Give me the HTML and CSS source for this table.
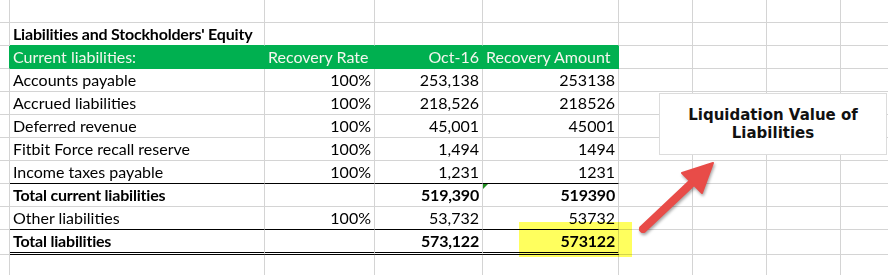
FILE: index.html
```html
<!DOCTYPE html>
<html>
<head>
<meta charset="utf-8">
<link rel="stylesheet" href="styles.css">
</head>
<body>
<div class="sheet">
  <!-- row 1 -->
  <div class="c"></div><div class="c"></div><div class="c"></div><div class="c"></div><div class="c"></div><div class="c"></div><div class="c"></div><div class="c"></div><div class="c"></div>
  <!-- row 2 -->
  <div class="c"></div><div class="c b gb">Liabilities and Stockholders' Equity</div><div class="c gb"></div><div class="c gb"></div><div class="c gb"></div><div class="c"></div><div class="c"></div><div class="c"></div><div class="c"></div>
  <!-- row 3 header -->
  <div class="c gr"></div><div class="c hd">Current liabilities:</div><div class="c hd">Recovery Rate</div><div class="c hd r">Oct-16</div><div class="c hd">Recovery Amount</div><div class="c"></div><div class="c"></div><div class="c"></div><div class="c"></div>
  <!-- row 4 -->
  <div class="c"></div><div class="c">Accounts payable</div><div class="c r">100%</div><div class="c r">253,138</div><div class="c r">253138</div><div class="c"></div><div class="c"></div><div class="c"></div><div class="c"></div>
  <!-- row 5 -->
  <div class="c"></div><div class="c">Accrued liabilities</div><div class="c r">100%</div><div class="c r">218,526</div><div class="c r">218526</div><div class="c"></div><div class="c"></div><div class="c"></div><div class="c"></div>
  <!-- row 6 -->
  <div class="c"></div><div class="c">Deferred revenue</div><div class="c r">100%</div><div class="c r">45,001</div><div class="c r">45001</div><div class="c"></div><div class="c"></div><div class="c"></div><div class="c"></div>
  <!-- row 7 -->
  <div class="c"></div><div class="c">Fitbit Force recall reserve</div><div class="c r">100%</div><div class="c r">1,494</div><div class="c r">1494</div><div class="c"></div><div class="c"></div><div class="c"></div><div class="c"></div>
  <!-- row 8 -->
  <div class="c"></div><div class="c bk">Income taxes payable</div><div class="c r bk">100%</div><div class="c r bk">1,231</div><div class="c r bk">1231</div><div class="c"></div><div class="c"></div><div class="c"></div><div class="c"></div>
  <!-- row 9 -->
  <div class="c"></div><div class="c b">Total current liabilities</div><div class="c"></div><div class="c r b">519,390</div><div class="c r b flag">519390</div><div class="c"></div><div class="c"></div><div class="c"></div><div class="c"></div>
  <!-- row 10 -->
  <div class="c"></div><div class="c bk">Other liabilities</div><div class="c r bk">100%</div><div class="c r bk">53,732</div><div class="c r bk">53732</div><div class="c"></div><div class="c"></div><div class="c"></div><div class="c"></div>
  <!-- row 11 -->
  <div class="c"></div><div class="c b dbl">Total liabilities</div><div class="c dbl"></div><div class="c r b dbl">573,122</div><div class="c r b dbl">573122</div><div class="c"></div><div class="c"></div><div class="c"></div><div class="c"></div>
  <!-- row 12 -->
  <div class="c"></div><div class="c"></div><div class="c"></div><div class="c"></div><div class="c"></div><div class="c"></div><div class="c"></div><div class="c"></div><div class="c"></div>
</div>

<div class="hilite"></div>

<div class="textbox">Liquidation Value of<br>Liabilities</div>

<svg class="arrow" width="100" height="90" viewBox="0 0 100 90">
  <g class="arrow-shape">
    <line x1="13" y1="74" x2="66" y2="24" stroke="#e84c48" stroke-width="8" stroke-linecap="round"/>
    <polygon points="83,8 52,18 72,38" fill="#e84c48" stroke="#e84c48" stroke-width="2" stroke-linejoin="round"/>
  </g>
</svg>
</body>
</html>
```
FILE: styles.css
```css
html, body {
  margin: 0;
  padding: 0;
  background: #ffffff;
  overflow: hidden;
}

body {
  width: 888px;
  height: 275px;
  position: relative;
  font-family: "Lato", "Liberation Sans", sans-serif;
  font-size: 16px;
  color: #000;
}

.sheet {
  display: grid;
  grid-template-columns: 10px 255px 110px 108px 136px 74px 74px 74px 60px;
  grid-template-rows: 23px 23px 23px 23px 23px 23px 23px 23px 23px 23px 25px 23px;
}

.c {
  box-sizing: border-box;
  border-right: 1px solid #d4d4d4;
  border-bottom: 1px solid #d4d4d4;
  padding: 0 3px 0 3px;
  line-height: 22px;
  white-space: nowrap;
  position: relative;
}

.r { text-align: right; padding-right: 3px; }
.b { font-weight: 700; letter-spacing: -0.2px; }

.gb { border-bottom-color: #00b050; }
.gr { border-right-color: #00b050; }

.hd {
  background: #00b050;
  color: #f4f6ee;
  border-right-color: #00b050;
  border-bottom-color: #00b050;
}

.bk { border-bottom-color: #000; }

.dbl {
  border-bottom: 3px double #000;
}

.flag::before {
  content: "";
  position: absolute;
  left: 0;
  top: 0;
  width: 0;
  height: 0;
  border-top: 5px solid #1f8c1f;
  border-right: 5px solid transparent;
}

.hilite {
  position: absolute;
  left: 519px;
  top: 222px;
  width: 113px;
  height: 35px;
  background: #ffff5e;
  mix-blend-mode: multiply;
}

.textbox {
  position: absolute;
  left: 659px;
  top: 93px;
  width: 228px;
  height: 62px;
  box-sizing: border-box;
  border: 1px solid #dcdcdc;
  background: #fff;
  display: flex;
  align-items: center;
  justify-content: center;
  text-align: center;
  font-family: "DejaVu Sans", sans-serif;
  font-weight: 700;
  font-size: 15px;
  line-height: 18px;
  color: #111;
}

.arrow {
  position: absolute;
  left: 630px;
  top: 155px;
}

.arrow-shape {
  filter: drop-shadow(1px 2px 1.5px rgba(0, 0, 0, 0.35));
}
```
